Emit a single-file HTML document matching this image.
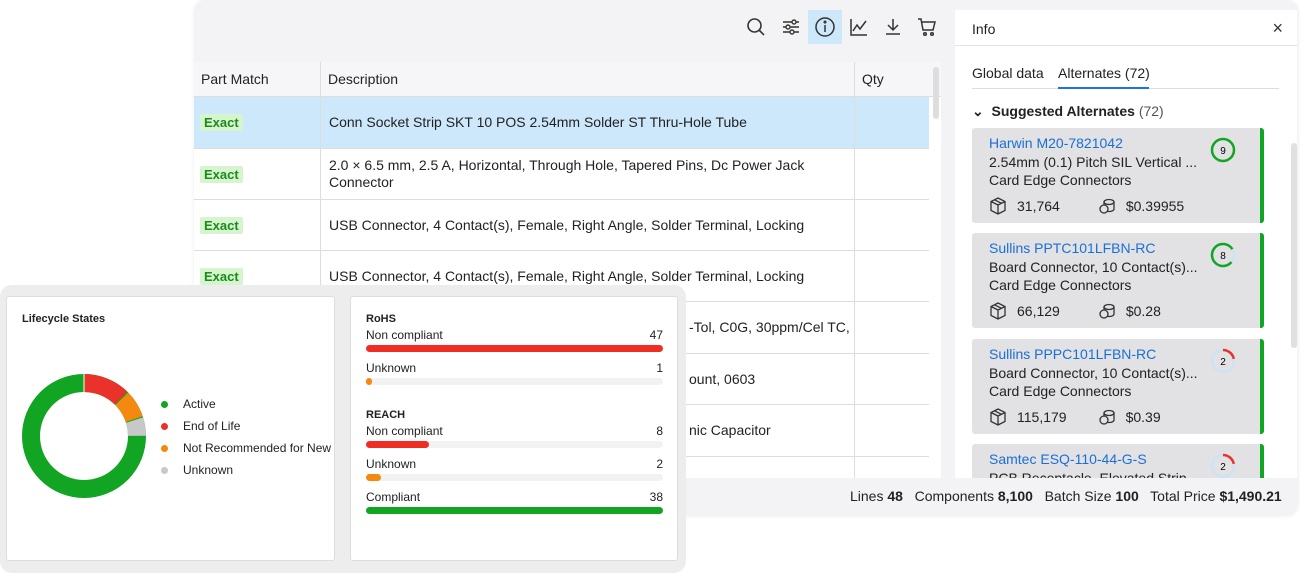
<!DOCTYPE html>
<html><head><meta charset="utf-8"><style>
*{box-sizing:border-box;margin:0;padding:0}
body{width:1300px;height:573px;background:#fff;font-family:"Liberation Sans",sans-serif;color:#222;position:relative;overflow:hidden}
.win{position:absolute;left:194px;top:0;width:1104px;height:516px;background:#f3f3f5;border-radius:12px;box-shadow:0 0 4px rgba(0,0,0,.08)}
.tb{position:absolute;top:10px;width:34px;height:34px;display:flex;align-items:center;justify-content:center}
.th{position:absolute;top:62px;height:35px;font-size:14px;line-height:35px;padding-left:7px;border-bottom:1px solid #ddd}
.row{position:absolute;left:194px;width:735px;height:51px;background:#fff;border-bottom:1px solid #ddd;font-size:14px}
.row .ex{position:absolute;left:6px;top:17px;background:#d6f5cf;color:#1c8a1c;font-weight:bold;font-size:13px;padding:1px 4px;border-radius:2px}
.row .d{position:absolute;left:135px;top:0;height:100%;display:flex;align-items:center;line-height:17px;width:510px}
.vl{position:absolute;width:1px;background:#ddd}
.info{position:absolute;left:955px;top:10px;width:342px;height:468px;background:#fff}
.card{position:absolute;left:972px;width:292px;height:95px;background:#e2e2e4;border-radius:3px;border-right:4px solid #12a523;font-size:14px}
.card .n{position:absolute;left:17px;top:7px;color:#1a6fd6}
.card .s{position:absolute;left:17px;top:26px}
.card .c{position:absolute;left:17px;top:44px}
.card .q{position:absolute;left:17px;top:69px;display:flex;align-items:center}
.card .q svg{margin-right:10px}
.bp{position:absolute;left:0;top:285px;width:686px;height:288px;background:#ededed;border-radius:12px}
.pc{position:absolute;top:296px;height:265px;background:#fff;border:1px solid #ddd;border-radius:3px}
.lb{position:absolute;left:15px;font-size:12px;width:297px;display:flex;justify-content:space-between}
.bar{position:absolute;left:15px;width:297px;height:7px;border-radius:4px;background:#f2f2f2}
.bar i{display:block;height:7px;border-radius:4px}
.lg{position:absolute;left:154px;font-size:12px;display:flex;align-items:center;white-space:nowrap}
.lg b{width:7px;height:7px;border-radius:50%;margin-right:15px}
</style></head><body>
<div class="win">
 <div class="tb" style="left:545px"><svg width="20" height="20" fill="none" stroke="#333" stroke-width="1.6"><circle cx="8.5" cy="8.5" r="6.5"/><path d="M13 13l5 5"/></svg></div>
 <div class="tb" style="left:580px"><svg width="20" height="20" fill="none" stroke="#333" stroke-width="1.4"><path d="M2 5h16M2 10h16M2 15h16"/><circle cx="13" cy="5" r="2" fill="#f3f3f5"/><circle cx="7" cy="10" r="2" fill="#f3f3f5"/><circle cx="11" cy="15" r="2" fill="#f3f3f5"/></svg></div>
 <div class="tb" style="left:614px;background:#cde7fb"><svg width="22" height="22" fill="none" stroke="#333" stroke-width="1.5"><circle cx="11" cy="11" r="9"/><path d="M11 9v7"/><circle cx="11" cy="6" r=".8" fill="#333"/></svg></div>
 <div class="tb" style="left:648px"><svg width="20" height="20" fill="none" stroke="#333" stroke-width="1.5"><path d="M2 2v16h16M4 14l4-6 3 4 6-8"/></svg></div>
 <div class="tb" style="left:682px"><svg width="20" height="20" fill="none" stroke="#333" stroke-width="1.5"><path d="M10 2v11M5 8l5 5 5-5M3 17h14"/></svg></div>
 <div class="tb" style="left:716px"><svg width="20" height="20" fill="none" stroke="#333" stroke-width="1.5"><path d="M1 2h3l2 11h10l2-8H5"/><circle cx="8" cy="17" r="1.3"/><circle cx="15" cy="17" r="1.3"/></svg></div>
 <div style="position:absolute;left:656px;bottom:12px;font-size:14px;white-space:nowrap">Lines <b>48</b>&nbsp;&nbsp; Components <b>8,100</b>&nbsp;&nbsp; Batch Size <b>100</b>&nbsp;&nbsp; Total Price <b>$1,490.21</b></div>
</div>
<div style="position:absolute;left:194px;top:62px;width:747px;height:416px;background:#fff"></div>
<div class="th" style="left:194px;width:126px;background:#f6f6f8">Part Match</div>
<div class="th" style="left:321px;width:533px;background:#f6f6f8">Description</div>
<div class="th" style="left:855px;width:86px;background:#f6f6f8">Qty</div>
<div class="row" style="top:97px;height:52px;background:#cde7fb"><span class="ex">Exact</span><div class="d">Conn Socket Strip SKT 10 POS 2.54mm Solder ST Thru-Hole Tube</div></div>
<div class="row" style="top:149px"><span class="ex">Exact</span><div class="d">2.0 × 6.5 mm, 2.5 A, Horizontal, Through Hole, Tapered Pins, Dc Power Jack Connector</div></div>
<div class="row" style="top:200px"><span class="ex">Exact</span><div class="d">USB Connector, 4 Contact(s), Female, Right Angle, Solder Terminal, Locking</div></div>
<div class="row" style="top:251px"><span class="ex">Exact</span><div class="d">USB Connector, 4 Contact(s), Female, Right Angle, Solder Terminal, Locking</div></div>
<div class="row" style="top:302px;height:52px"><div class="d" style="left:495px">-Tol, C0G, 30ppm/Cel TC,</div></div>
<div class="row" style="top:354px"><div class="d" style="left:495px">ount, 0603</div></div>
<div class="row" style="top:405px;height:52px"><div class="d" style="left:495px">nic Capacitor</div></div>
<div class="vl" style="left:320px;top:62px;height:416px"></div>
<div class="vl" style="left:854px;top:62px;height:416px"></div>
<div style="position:absolute;left:933px;top:67px;width:6px;height:52px;border-radius:3px;background:#ddd"></div>
<div class="info">
 <div style="position:absolute;left:17px;top:11px;font-size:14px">Info</div>
 <div style="position:absolute;right:14px;top:8px;font-size:18px;color:#333">×</div>
 <div style="position:absolute;left:0;top:35px;width:342px;border-top:1px solid #e4e4e4"></div>
 <div style="position:absolute;left:17px;top:55px;font-size:14px">Global data</div>
 <div style="position:absolute;left:103px;top:55px;font-size:14px">Alternates (72)</div>
 <div style="position:absolute;left:17px;top:78px;width:307px;border-top:1px solid #ddd"></div>
 <div style="position:absolute;left:103px;top:77px;width:91px;height:2px;background:#1a73e8"></div>
 <div style="position:absolute;left:17px;top:93px;font-size:14px;font-weight:bold">⌄&nbsp; Suggested Alternates <span style="font-weight:normal;color:#555">(72)</span></div>
 <div style="position:absolute;left:336px;top:133px;width:6px;height:205px;border-radius:3px;background:#e0e0e0"></div>
</div>
<div style="position:absolute;left:955px;top:128px;width:342px;height:350px;overflow:hidden">
<div style="position:absolute;left:-955px;top:-128px;width:1300px;height:600px">
 <div class="card" style="top:128px"><div class="n">Harwin M20-7821042</div><div class="s">2.54mm (0.1) Pitch SIL Vertical ...</div><div class="c">Card Edge Connectors</div>
  <svg style="position:absolute;left:238px;top:9px" width="26" height="26"><circle cx="13" cy="13" r="11" fill="none" stroke="#12a523" stroke-width="2.5"/><text x="13" y="17" font-size="10" text-anchor="middle" font-family="Liberation Sans">9</text></svg>
  <div class="q"><svg width="18" height="18" fill="none" stroke="#333" stroke-width="1.3"><path d="M9 1l7 3.5v9L9 17l-7-3.5v-9z M2 4.5L9 8l7-3.5 M9 8v9 M5.5 2.8l7 3.5"/></svg>31,764<span style="margin-left:38px;display:flex;align-items:center"><svg width="18" height="18" fill="none" stroke="#333" stroke-width="1.3" style="margin-right:10px"><ellipse cx="11" cy="5" rx="5" ry="2.5"/><path d="M6 5v7c0 1.4 2.2 2.5 5 2.5s5-1.1 5-2.5V5"/><circle cx="6" cy="12" r="4" fill="#e2e2e4"/></svg>$0.39955</span></div></div>
 <div class="card" style="top:233px"><div class="n">Sullins PPTC101LFBN-RC</div><div class="s">Board Connector, 10 Contact(s)...</div><div class="c">Card Edge Connectors</div>
  <svg style="position:absolute;left:238px;top:9px" width="26" height="26"><circle cx="13" cy="13" r="11" fill="none" stroke="#cde3f5" stroke-width="2.5"/><circle cx="13" cy="13" r="11" fill="none" stroke="#12a523" stroke-width="2.5" stroke-dasharray="55 69" transform="rotate(40 13 13)"/><text x="13" y="17" font-size="10" text-anchor="middle" font-family="Liberation Sans">8</text></svg>
  <div class="q"><svg width="18" height="18" fill="none" stroke="#333" stroke-width="1.3"><path d="M9 1l7 3.5v9L9 17l-7-3.5v-9z M2 4.5L9 8l7-3.5 M9 8v9 M5.5 2.8l7 3.5"/></svg>66,129<span style="margin-left:38px;display:flex;align-items:center"><svg width="18" height="18" fill="none" stroke="#333" stroke-width="1.3" style="margin-right:10px"><ellipse cx="11" cy="5" rx="5" ry="2.5"/><path d="M6 5v7c0 1.4 2.2 2.5 5 2.5s5-1.1 5-2.5V5"/><circle cx="6" cy="12" r="4" fill="#e2e2e4"/></svg>$0.28</span></div></div>
 <div class="card" style="top:339px"><div class="n">Sullins PPPC101LFBN-RC</div><div class="s">Board Connector, 10 Contact(s)...</div><div class="c">Card Edge Connectors</div>
  <svg style="position:absolute;left:238px;top:9px" width="26" height="26"><circle cx="13" cy="13" r="11" fill="none" stroke="#cde3f5" stroke-width="2.5"/><circle cx="13" cy="13" r="11" fill="none" stroke="#e8322a" stroke-width="2.5" stroke-dasharray="15 69" transform="rotate(-90 13 13)"/><text x="13" y="17" font-size="10" text-anchor="middle" font-family="Liberation Sans">2</text></svg>
  <div class="q"><svg width="18" height="18" fill="none" stroke="#333" stroke-width="1.3"><path d="M9 1l7 3.5v9L9 17l-7-3.5v-9z M2 4.5L9 8l7-3.5 M9 8v9 M5.5 2.8l7 3.5"/></svg>115,179<span style="margin-left:31px;display:flex;align-items:center"><svg width="18" height="18" fill="none" stroke="#333" stroke-width="1.3" style="margin-right:10px"><ellipse cx="11" cy="5" rx="5" ry="2.5"/><path d="M6 5v7c0 1.4 2.2 2.5 5 2.5s5-1.1 5-2.5V5"/><circle cx="6" cy="12" r="4" fill="#e2e2e4"/></svg>$0.39</span></div></div>
 <div class="card" style="top:444px"><div class="n">Samtec ESQ-110-44-G-S</div><div class="s">PCB Receptacle, Elevated Strip</div>
  <svg style="position:absolute;left:238px;top:9px" width="26" height="26"><circle cx="13" cy="13" r="11" fill="none" stroke="#cde3f5" stroke-width="2.5"/><circle cx="13" cy="13" r="11" fill="none" stroke="#e8322a" stroke-width="2.5" stroke-dasharray="15 69" transform="rotate(-90 13 13)"/><text x="13" y="17" font-size="10" text-anchor="middle" font-family="Liberation Sans">2</text></svg></div>
</div></div>

<div class="bp"></div>
<div class="pc" style="left:6px;width:329px;overflow:hidden">
 <div style="position:absolute;left:15px;top:16px;font-size:11px;font-weight:bold">Lifecycle States</div>
 <svg style="position:absolute;left:14px;top:76px" width="126" height="126"><g transform="translate(63,63) rotate(-90)" fill="none" stroke-width="18">
  <circle r="53" stroke="#12a523"/>
  <circle r="53" stroke="#e8322a" stroke-dasharray="41 400"/>
  <circle r="53" stroke="#f5890f" stroke-dasharray="0 42 24 400"/>
  <circle r="53" stroke="#c8c8c8" stroke-dasharray="0 67 16 400"/>
 </g><line x1="63" y1="1" x2="63" y2="19" stroke="#fff" stroke-width="1"/></svg>
 <div class="lg" style="top:100px"><b style="background:#12a523"></b>Active</div>
 <div class="lg" style="top:122px"><b style="background:#e8322a"></b>End of Life</div>
 <div class="lg" style="top:144px"><b style="background:#f5890f"></b>Not Recommended for New Designs</div>
 <div class="lg" style="top:166px"><b style="background:#c8c8c8"></b>Unknown</div>
</div>
<div class="pc" style="left:350px;width:328px">
 <div style="position:absolute;left:15px;top:16px;font-size:11px;font-weight:bold">RoHS</div>
 <div class="lb" style="top:31px"><span>Non compliant</span><span>47</span></div>
 <div class="bar" style="top:48px"><i style="width:100%;background:#f02d22"></i></div>
 <div class="lb" style="top:64px"><span>Unknown</span><span>1</span></div>
 <div class="bar" style="top:81px"><i style="width:6px;background:#f5890f"></i></div>
 <div style="position:absolute;left:15px;top:112px;font-size:11px;font-weight:bold">REACH</div>
 <div class="lb" style="top:127px"><span>Non compliant</span><span>8</span></div>
 <div class="bar" style="top:144px"><i style="width:63px;background:#f02d22"></i></div>
 <div class="lb" style="top:160px"><span>Unknown</span><span>2</span></div>
 <div class="bar" style="top:177px"><i style="width:15px;background:#f5890f"></i></div>
 <div class="lb" style="top:193px"><span>Compliant</span><span>38</span></div>
 <div class="bar" style="top:210px"><i style="width:100%;background:#12a523"></i></div>
</div>
</body></html>
